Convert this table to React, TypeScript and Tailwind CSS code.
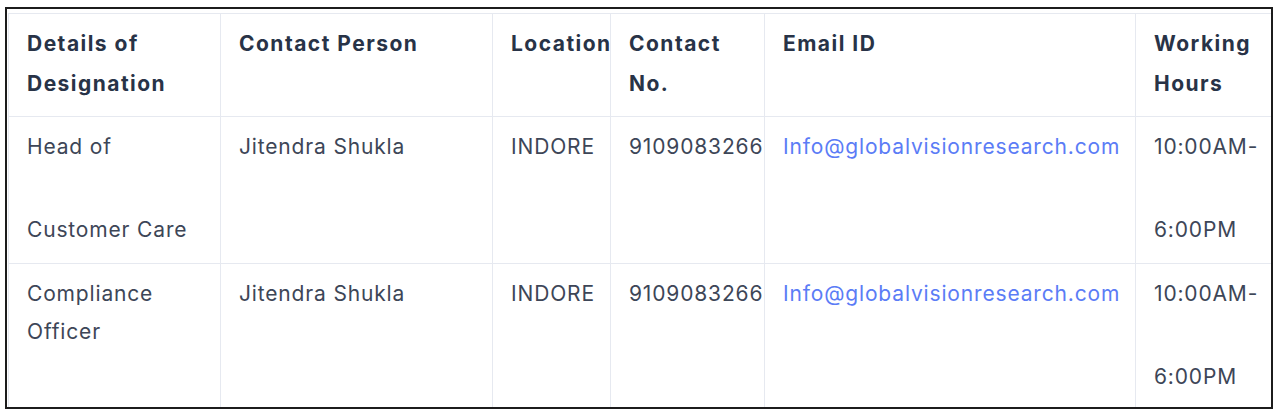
import React from "react";

const rows = [
  {
    designation: ["Head of", "Customer Care"],
    spaced: true,
    person: "Jitendra Shukla",
    location: "INDORE",
    phone: "9109083266",
    email: "Info@globalvisionresearch.com",
  },
  {
    designation: ["Compliance", "Officer"],
    spaced: false,
    person: "Jitendra Shukla",
    location: "INDORE",
    phone: "9109083266",
    email: "Info@globalvisionresearch.com",
  },
];

const th = "border border-[#e6e9f0] pl-[18px] pt-[10px] pb-[12px] text-left align-top font-bold tracking-[0.07em]";
const td = "border border-[#e6e9f0] pl-[18px] pt-[11px] pb-[14px] align-top tracking-[0.04em]";

export default function App() {
  return (
    <div className="h-[415px] w-[1276px] bg-white pl-[5px] pt-[7px]" style={{ fontFamily: "Inter, 'Liberation Sans', sans-serif" }}>
      <div className="h-[402px] w-[1268px] overflow-hidden border-2 border-[#1c1c1c] pl-[1px] pt-[4px]">
        <table className="w-[1263px] table-fixed border-collapse text-[21px]">
          <colgroup>
            <col className="w-[212px]" />
            <col className="w-[272px]" />
            <col className="w-[118px]" />
            <col className="w-[154px]" />
            <col className="w-[371px]" />
            <col className="w-[136px]" />
          </colgroup>
          <thead>
            <tr className="leading-[40px] text-[#283347]">
              <th className={th}>Details of<br />Designation</th>
              <th className={th}>Contact Person</th>
              <th className={th + " whitespace-nowrap"}>Location</th>
              <th className={th}>Contact<br />No.</th>
              <th className={th}>Email ID</th>
              <th className={th}>Working<br />Hours</th>
            </tr>
          </thead>
          <tbody className="leading-[38px] text-[#3d4657]">
            {rows.map((r, i) => (
              <tr key={i}>
                <td className={td}>
                  <div>{r.designation[0]}</div>
                  <div className={r.spaced ? "mt-[45px]" : ""}>{r.designation[1]}</div>
                </td>
                <td className={td + " whitespace-nowrap"}>{r.person}</td>
                <td className={td}>{r.location}</td>
                <td className={td + " whitespace-nowrap"}>{r.phone}</td>
                <td className={td + " whitespace-nowrap"}>
                  <a href="#" className="text-[#5b7cf6]">{r.email}</a>
                </td>
                <td className={td + " whitespace-nowrap"}>
                  <div>10:00AM-</div>
                  <div className="mt-[45px]">6:00PM</div>
                </td>
              </tr>
            ))}
          </tbody>
        </table>
      </div>
    </div>
  );
}
